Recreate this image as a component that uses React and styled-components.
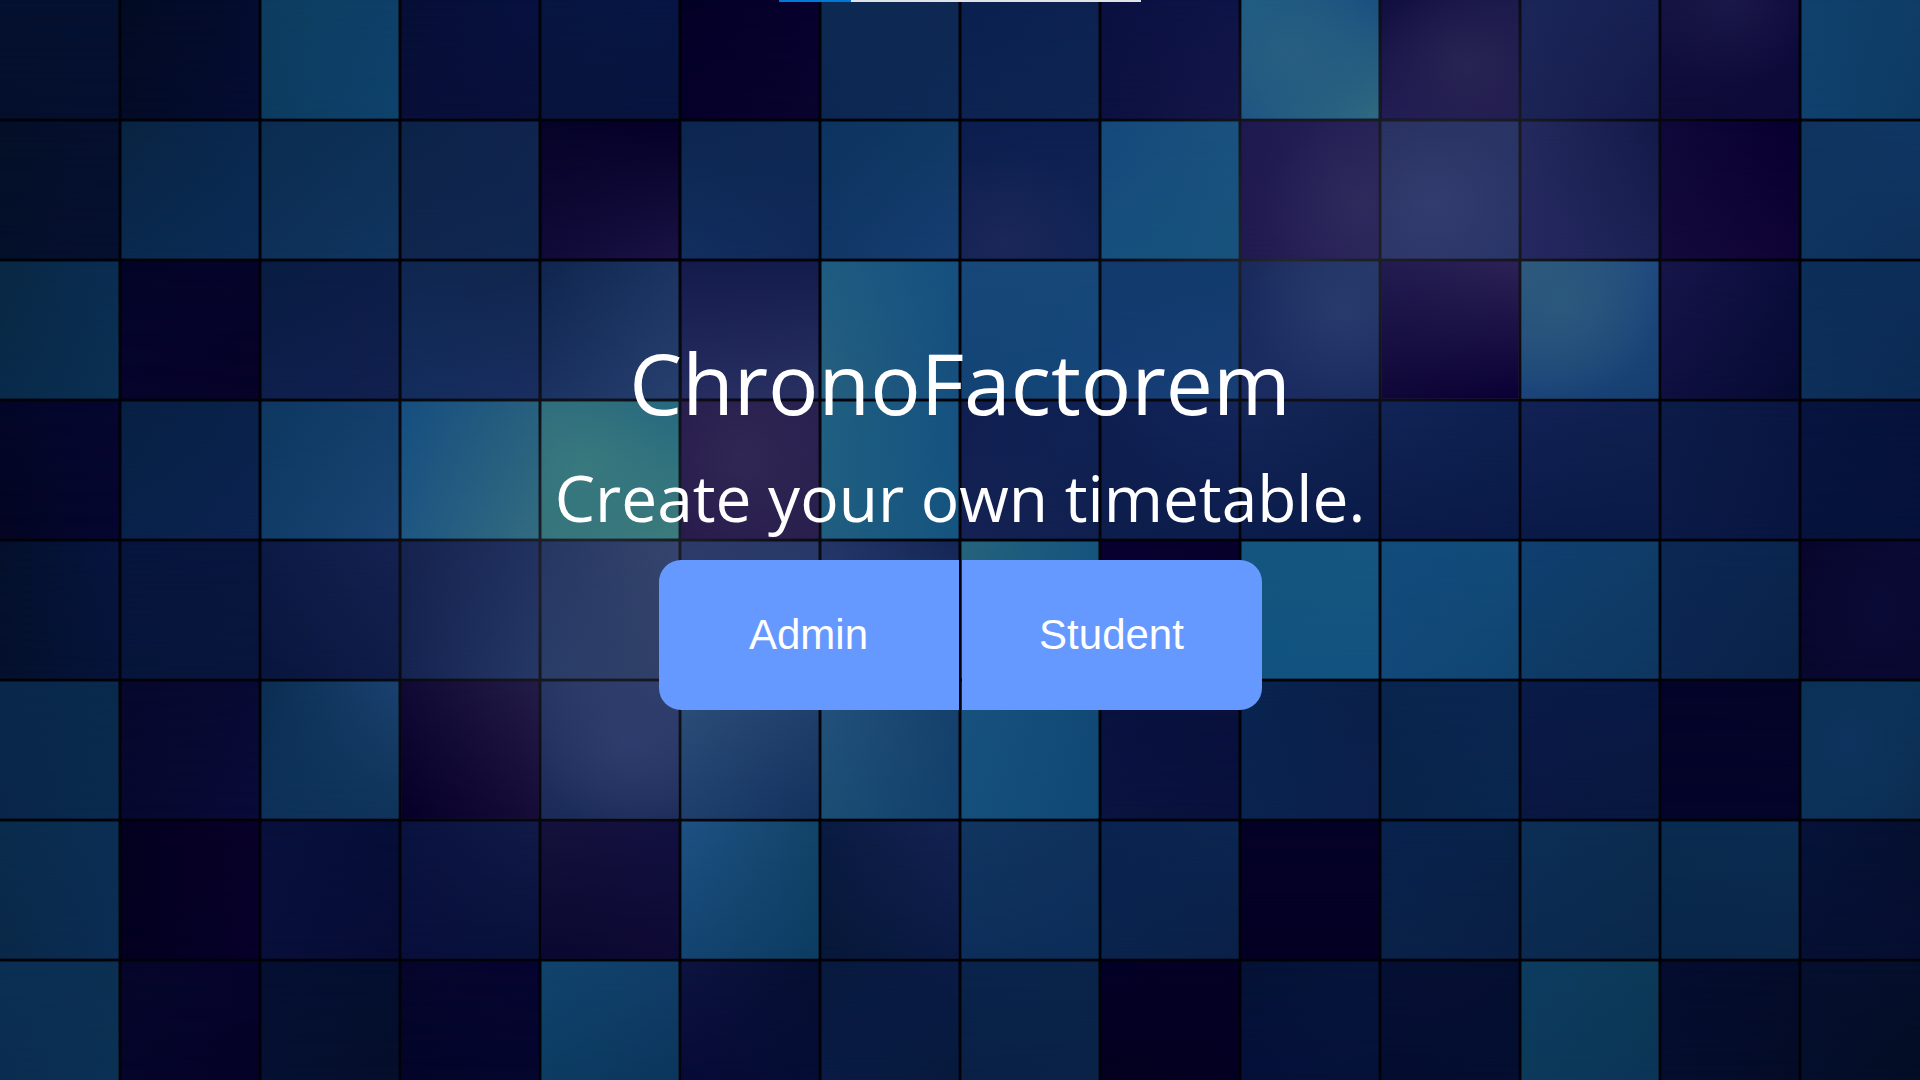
import React from "react";
import styled, { createGlobalStyle } from "styled-components";

const GlobalStyle = createGlobalStyle`
  *, *::before, *::after { box-sizing: border-box; }
  body { margin: 0; background: #000; }
`;

const Page = styled.div`
  display: grid;
  min-height: 100vh;
  overflow: hidden;
  background: #000;
`;

const Backdrop = styled.svg`
  grid-area: 1 / 1;
  display: block;
  width: 100%;
  height: 100vh;
`;

const Content = styled.div`
  grid-area: 1 / 1;
  position: relative;
  display: flex;
  flex-direction: column;
  align-items: center;
`;

const ProgressTrack = styled.div`
  display: flex;
  width: 362px;
  height: 2px;
  background: #e0e3e8;
`;

const ProgressFill = styled.div`
  background: #0078d7;
`;

const Hero = styled.main`
  display: flex;
  flex-direction: column;
  align-items: center;
  padding: 320px 24px 24px;
  color: #fff;
  font-family: "Segoe UI", "Open Sans", "Noto Sans", sans-serif;
  text-align: center;
`;

const Title = styled.h1`
  margin: 0;
  font-size: 84px;
  font-weight: 400;
  line-height: 122px;
`;

const Tagline = styled.p`
  margin: 0 0 8px;
  font-size: 64px;
  line-height: 108px;
`;

const Choices = styled.div`
  display: flex;
  gap: 3px;
`;

const ChoiceButton = styled.button`
  width: 300px;
  height: 150px;
  padding: 0;
  border: 0;
  border-radius: ${(p) => (p.$side === "left" ? "22px 0 0 22px" : "0 22px 22px 0")};
  background: #6699ff;
  color: #fff;
  font-family: "Liberation Sans", Arial, sans-serif;
  font-size: 42px;
  cursor: pointer;
`;

// One line per tile: top-left, top-right, bottom-left, bottom-right and, for some, a glow colour with its centre in %.
const ROWS = [
  [
    "051130 051130 040f2c 050f30", "030b24 050d30 030b26 050c32", "0d3d60 0e4068 0d3b60 0e426c",
    "060f36 071140 080f38 08103a", "061640 071544 08143c 07143e", "040026 07012e 05002a 09032e",
    "0d2a52 0e2853 0c2752 0e2a56", "0a2150 0d2250 0d2451 0e2553", "0a1140 0f1448 0c1140 151648",
    "1f5c84 1b5080 1e5484 30697e 275e80 35 45", "120f40 1c1a4c 221e54 231e50 272352 62 55",
    "1b2658 172052 1c2456 131a4a", "141240 0e0a3c 0e0b38 0d0a3a 1a1848 50 0", "10416c 0e3d68 10416e 0d3a62",
  ],
  [
    "040f28 05102e 04102a 051030", "092442 0a2850 0a294e 0b2c55", "0b2d50 0d3056 0e3058 10355f",
    "0c2348 10244e 11264e 102750", "060428 050028 100a38 1a1244", "0c2650 0e2954 122f5e 102858",
    "0d3460 103964 103766 163e72", "0b1e4e 0d1f50 142254 122556 1a2758 32 90", "15497c 1a527e 16507e 17527c",
    "1e1a50 262256 201a50 2a255a 2e2a5c 88 60", "293260 2a3566 2c3668 2a3468 323c6e 38 60",
    "242a5e 131a48 262860 1b2154", "10083a 080030 140a3c 0e0334", "10345e 0f3764 0f3460 0e305a",
  ],
  [
    "092844 0a2d52 092a4a 0a3052", "040428 06042a 06042c 060228", "091c42 0c1d48 0e1f4c 12204e",
    "0f2750 11264e 132d5c 1a2e60", "10264f 1b3462 1b3262 27406e", "151c4c 131c4c 262c60 2a3262",
    "1f5c82 15507f 26607e 164f7e", "184879 17487a 124374 15467a", "123a6c 123a6c 153c74 184076",
    "1a2a5c 27386a 1c2c62 182a5e 283a6c 75 35", "221c50 2c2256 100738 0a0034",
    "305c7c 1f4a80 1a447a 153e70 2b587d 30 30", "17164a 0a0d3c 0e1040 060a32", "0c2e5a 0c2e58 0d305a 0b2a54",
  ],
  [
    "040628 060630 030522 050630", "082044 09224a 08224a 0c2350", "0e3860 143f6c 103c68 1a4574",
    "164f80 28607e 1e5682 336c80", "2e6c7c 276a80 35747c 3c7c7c 38787e 30 50", "281e4e 2a2150 281c4c 2a204e 302754 45 42",
    "1f6080 165280 205e80 155480", "101f50 0f2254 152254 10204f", "0e1f50 14255a 0d1e4c 0c1c4c",
    "142758 102250 0b1d4c 0a1a48", "112556 0d2050 0b1a48 0a1a46", "122254 0f2050 0a1a48 0a1a46",
    "0c1c48 0a1642 0b1a46 081540", "061540 06123a 06133c 06123c",
  ],
  [
    "04102c 071540 04102c 06143a", "06153c 08163e 06153a 08153c", "0c1a46 142250 08163e 101c48",
    "15234e 223260 152350 263866", "263762 35456e 2a3d68 304068", "2c3b6a 283868 30406a 2a3c6a",
    "253568 152656 25406c 1c3c68", "26647c 15547e 1a587e 14507c", "080030 08002c 08002c 08002c",
    "14567e 165680 115280 125280", "114c7c 124b7a 12497a 10446f", "103f70 0f3d68 0e3c66 0e3660",
    "0c2854 0a264e 0b2650 0a2248", "08062c 0a0a34 08082e 09072e 0a0a36 65 50",
  ],
  [
    "09284a 0a2a4c 09264a 0a2a4e", "06082c 080a34 06082e 0a0a38", "0b2e52 1a4270 0d315a 0f3358",
    "100a34 241c48 060028 160c38", "283764 32426e 1b2b58 1e2c5a 2f3d6e 65 40", "2e507a 24426e 1e3f6c 13325e",
    "24527c 15406c 1b4e74 12406c", "18527e 124a76 154f7c 104874", "091240 08103c 0a1440 08103c",
    "082450 0a2048 0a2450 0c1f4c", "09254e 0a2650 092449 09264e", "0a1b48 091946 091742 08183e",
    "04042a 050428 04042a 04042a", "0c3054 0c3258 0c325a 0c2c50 0d345e 40 45",
  ],
  [
    "0a2c4c 0b2e54 0a2848 0b2d54", "040020 090028 030020 07002a", "08103c 060e38 080f3a 070c34",
    "0a133f 121a48 080f3c 07113a", "15123c 121040 090830 0e0a34", "1e5284 124468 134470 0c3c62",
    "0a1b42 142252 071838 0a1a44", "113660 0f315c 0d2e5a 0c2d58", "0a2350 0b2650 0a244c 0b2048",
    "050228 050228 040024 040024", "08224e 082248 0a2248 0a1e44", "0c2f56 0c2c50 0b2a50 0a284a",
    "0a2b50 0b2c52 082648 0a2648", "06133a 051030 051032 050e30",
  ],
  [
    "0b2f54 0b3052 0a2c50 0b3154", "06062a 06042c 05042a 050226", "050f32 040f30 051032 050e2a",
    "06062c 060430 030428 04062e", "11436c 103e68 0c3c62 0c355c", "0d1440 050e32 070a36 050d34",
    "081a3e 0a1b46 091b44 071a3c", "09244c 0a244a 0a2046 0a2248", "040028 050024 04001e 040022",
    "051236 06143c 05103a 051238", "051034 050f30 040d30 040e30", "0c3c60 0c3a58 0c3a5a 0b3456",
    "050d30 040c2a 040e2e 040b26", "05102e 050f2c 040f2c 040d24",
  ],
];

const WIDTH = 1920;
const HEIGHT = 1080;
const CELL = 140;
const OFFSET = 20;
const HALF_LINE = 1.5;

// Light that shows through the dark lines between the tiles.
const LINE_GLOWS = [
  [1440, 170, 300],
  [600, 570, 330],
  [1290, 250, 260],
];

function Tile({ row, col, spec }) {
  const [tl, tr, bl, br, glow, gx, gy] = spec.split(" ");
  const x = Math.max(0, col * CELL - OFFSET + HALF_LINE);
  const y = Math.max(0, row * CELL - OFFSET + HALF_LINE);
  const right = Math.min(WIDTH, (col + 1) * CELL - OFFSET - HALF_LINE);
  const bottom = Math.min(HEIGHT, (row + 1) * CELL - OFFSET - HALF_LINE);
  const box = { x, y, width: right - x, height: bottom - y };
  const id = `tile-${row}-${col}`;
  return (
    <g>
      <linearGradient id={`${id}-top`}>
        <stop offset="0" stopColor={`#${tl}`} />
        <stop offset="1" stopColor={`#${tr}`} />
      </linearGradient>
      <linearGradient id={`${id}-bottom`}>
        <stop offset="0" stopColor={`#${bl}`} />
        <stop offset="1" stopColor={`#${br}`} />
      </linearGradient>
      <rect {...box} fill={`url(#${id}-top)`} />
      <rect {...box} fill={`url(#${id}-bottom)`} mask="url(#fade-down)" />
      {glow && (
        <>
          <radialGradient id={`${id}-glow`} cx={`${gx}%`} cy={`${gy}%`} fx={`${gx}%`} fy={`${gy}%`} r="70%">
            <stop offset="0" stopColor={`#${glow}`} />
            <stop offset="0.5" stopColor={`#${glow}`} stopOpacity="0.45" />
            <stop offset="1" stopColor={`#${glow}`} stopOpacity="0" />
          </radialGradient>
          <rect {...box} fill={`url(#${id}-glow)`} />
        </>
      )}
    </g>
  );
}

function Mosaic() {
  return (
    <Backdrop viewBox={`0 0 ${WIDTH} ${HEIGHT}`} preserveAspectRatio="xMidYMid slice" aria-hidden="true">
      <defs>
        <linearGradient id="fade" x1="0" y1="0" x2="0" y2="1">
          <stop offset="0" stopColor="#fff" stopOpacity="0" />
          <stop offset="1" stopColor="#fff" stopOpacity="1" />
        </linearGradient>
        <mask id="fade-down" maskUnits="objectBoundingBox" maskContentUnits="objectBoundingBox" x="0" y="0" width="1" height="1" mask-type="alpha">
          <rect width="1" height="1" fill="url(#fade)" />
        </mask>
        <radialGradient id="line-glow">
          <stop offset="0" stopColor="#27272f" />
          <stop offset="0.4" stopColor="#1e1e26" stopOpacity="0.7" />
          <stop offset="1" stopColor="#10101a" stopOpacity="0" />
        </radialGradient>
      </defs>
      <rect width={WIDTH} height={HEIGHT} fill="#010108" />
      {LINE_GLOWS.map(([cx, cy, r]) => (
        <circle key={cx} cx={cx} cy={cy} r={r} fill="url(#line-glow)" />
      ))}
      {ROWS.map((tiles, row) =>
        tiles.map((spec, col) => <Tile key={`${row}-${col}`} row={row} col={col} spec={spec} />)
      )}
    </Backdrop>
  );
}

function LoadingBar({ value }) {
  return (
    <ProgressTrack role="progressbar" aria-label="Loading" aria-valuenow={value} aria-valuemin={0} aria-valuemax={100}>
      <ProgressFill style={{ width: `${value}%` }} />
    </ProgressTrack>
  );
}

export default function App() {
  return (
    <Page>
      <GlobalStyle />
      <Mosaic />
      <Content>
        <LoadingBar value={20} />
        <Hero>
          <Title>ChronoFactorem</Title>
          <Tagline>Create your own timetable.</Tagline>
          <Choices>
            <ChoiceButton type="button" $side="left">Admin</ChoiceButton>
            <ChoiceButton type="button" $side="right">Student</ChoiceButton>
          </Choices>
        </Hero>
      </Content>
    </Page>
  );
}
